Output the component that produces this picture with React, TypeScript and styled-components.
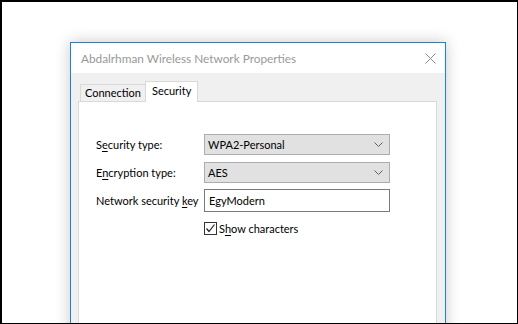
import React from 'react';
import styled, { createGlobalStyle } from 'styled-components';

const GlobalStyle = createGlobalStyle`
  html, body {
    margin: 0;
    padding: 0;
    background: #ffffff;
  }
  body {
    font-family: 'Lato', 'Segoe UI', sans-serif;
    font-size: 11px;
  }
`

const Screen = styled.div`
  box-sizing: border-box;
  width: 518px;
  height: 324px;
  overflow: hidden;
  background: #ffffff;
  border-top: 2px solid #000;
  border-left: 2px solid #000;
  border-right: 1px solid #000;
  border-bottom: 1px solid #000;
  padding: 40px 0 0 68px;
`

const Dialog = styled.div`
  box-sizing: border-box;
  width: 376px;
  height: 320px;
  border: 1px solid #1883d7;
  background: #f0f0f0;
  box-shadow: 0 0 14px rgba(0, 0, 0, 0.22);
  display: flex;
  flex-direction: column;
`

const TitleBar = styled.div`
  height: 30px;
  background: #ffffff;
  display: flex;
  align-items: center;
  justify-content: space-between;
  padding: 0 9px 0 10px;
`

const Title = styled.span`
  color: #999999;
  font-size: 11.8px;
`

const CloseButton = styled.div`
  width: 12px;
  height: 12px;
  display: flex;
  align-items: center;
  justify-content: center;
`

const Body = styled.div`
  flex: 1;
  padding: 8px 8px 0 7px;
  display: flex;
  flex-direction: column;
`

const TabRow = styled.div`
  display: flex;
  align-items: flex-end;
  padding-left: 2px;
  position: relative;
  z-index: 1;
  margin-bottom: -1px;
`

const Tab = styled.div<{ $active?: boolean }>`
  box-sizing: border-box;
  height: ${p => (p.$active ? '21px' : '18px')};
  padding: 0 ${p => (p.$active ? '6px' : '4px')};
  margin-left: ${p => (p.$active ? '-1px' : '0')};
  border: 1px solid #d9d9d9;
  border-bottom: ${p => (p.$active ? 'none' : '1px solid #d9d9d9')};
  background: ${p => (p.$active ? '#ffffff' : '#f0f0f0')};
  color: #000;
  display: flex;
  align-items: ${p => (p.$active ? 'flex-start' : 'center')};
  padding-top: ${p => (p.$active ? '1px' : '0')};
  line-height: 16px;
`

const Panel = styled.div`
  flex: 1;
  background: #ffffff;
  border: 1px solid #d9d9d9;
  border-bottom: none;
  padding: 32px 0 0 17px;
  display: flex;
  flex-direction: column;
`

const FormRow = styled.div<{ $gap: number }>`
  display: flex;
  align-items: center;
  margin-bottom: ${p => p.$gap}px;
`

const Label = styled.span`
  width: 108px;
  color: #000;
  white-space: nowrap;
`

const Key = styled.span`
  text-decoration: underline;
  text-underline-offset: 2px;
`

const Select = styled.div`
  box-sizing: border-box;
  width: 186px;
  height: 21px;
  background: #e1e1e1;
  border: 1px solid #adadad;
  display: flex;
  align-items: center;
  justify-content: space-between;
  padding: 0 6px 0 3px;
  color: #000;
`

const TextBox = styled.div`
  box-sizing: border-box;
  width: 186px;
  height: 23px;
  background: #ffffff;
  border: 1px solid #7a7a7a;
  display: flex;
  align-items: center;
  padding: 0 4px;
  color: #000;
`

const CheckRow = styled.label`
  display: flex;
  align-items: center;
  margin-left: 108px;
  gap: 2px;
  color: #000;
`

const CheckBox = styled.span`
  box-sizing: border-box;
  width: 13px;
  height: 13px;
  border: 1px solid #333333;
  background: #ffffff;
  display: flex;
  align-items: center;
  justify-content: center;
`

const Chevron = () => (
  <svg width="9" height="5" viewBox="0 0 9 5">
    <path d="M0.5 0.5 L4.5 4.5 L8.5 0.5" fill="none" stroke="#606060" strokeWidth="1" />
  </svg>
)

const App: React.FC = () => (
  <>
    <GlobalStyle />
    <Screen>
      <Dialog>
        <TitleBar>
          <Title>Abdalrhman Wireless Network Properties</Title>
          <CloseButton>
            <svg width="11" height="11" viewBox="0 0 11 11">
              <path d="M0.5 0.5 L10.5 10.5 M10.5 0.5 L0.5 10.5" stroke="#8a8a8a" strokeWidth="1" />
            </svg>
          </CloseButton>
        </TitleBar>
        <Body>
          <TabRow>
            <Tab>Connection</Tab>
            <Tab $active>Security</Tab>
          </TabRow>
          <Panel>
            <FormRow $gap={7}>
              <Label>S<Key>e</Key>curity type:</Label>
              <Select>
                <span>WPA2-Personal</span>
                <Chevron />
              </Select>
            </FormRow>
            <FormRow $gap={6}>
              <Label>E<Key>n</Key>cryption type:</Label>
              <Select>
                <span>AES</span>
                <Chevron />
              </Select>
            </FormRow>
            <FormRow $gap={10}>
              <Label>Network security <Key>k</Key>ey</Label>
              <TextBox>EgyModern</TextBox>
            </FormRow>
            <CheckRow>
              <CheckBox>
                <svg width="11" height="11" viewBox="0 0 11 11">
                  <path d="M1.5 5.5 L4 8.5 L9.5 1.5" fill="none" stroke="#222" strokeWidth="1.2" />
                </svg>
              </CheckBox>
              <span>S<Key>h</Key>ow characters</span>
            </CheckRow>
          </Panel>
        </Body>
      </Dialog>
    </Screen>
  </>
)

export default App
